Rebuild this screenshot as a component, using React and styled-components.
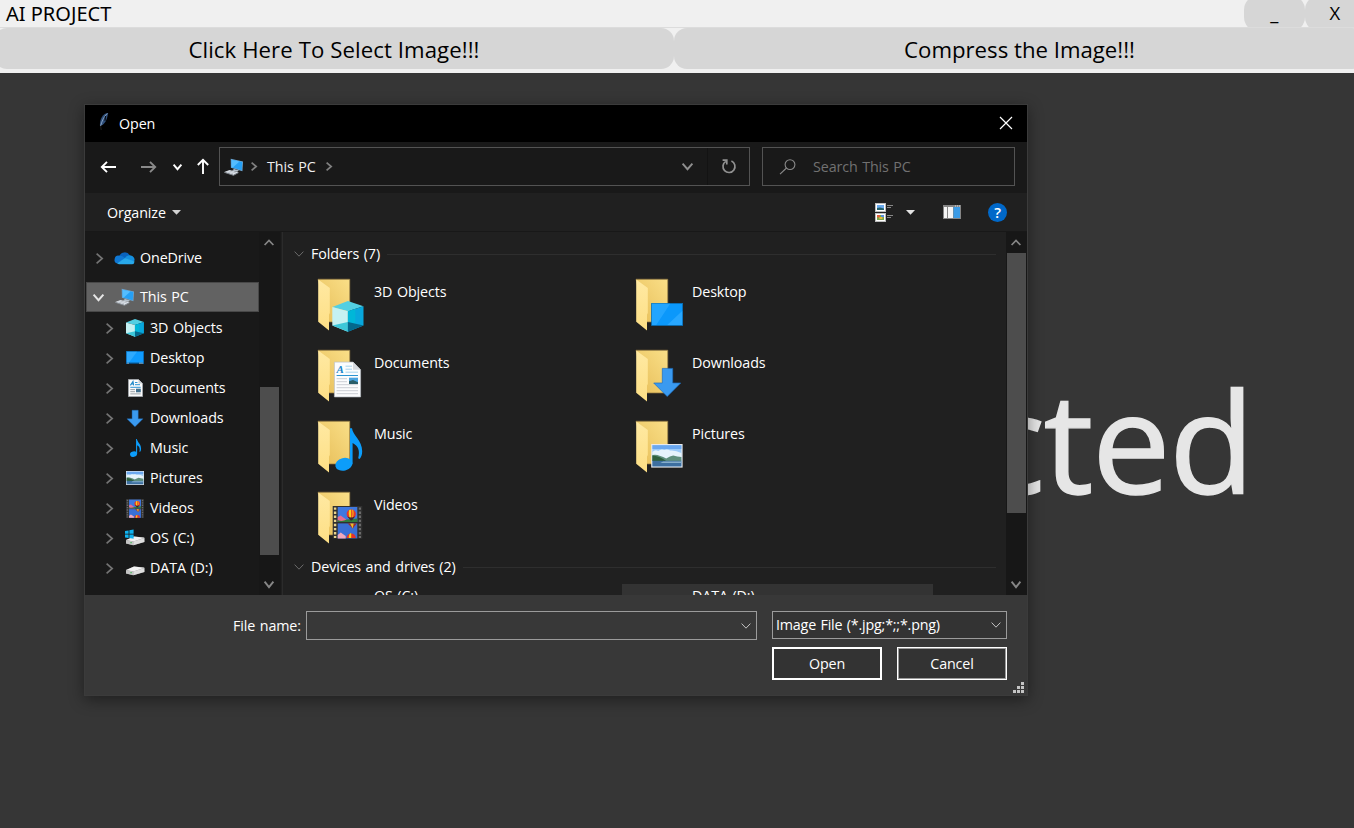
import React from "react";
import styled, { createGlobalStyle } from "styled-components";

const Global = createGlobalStyle`
  * { box-sizing: border-box; }
  html, body, #root { margin: 0; height: 100%; overflow: hidden; }
  body { font-family: "Open Sans", "Noto Sans", sans-serif; background: #363636; }
  svg { display: block; flex: none; overflow: visible; }
`;

/* ---------- host application ---------- */
const Page = styled.div`
  position: relative;
  width: 1354px;
  height: 828px;
  display: flex;
  flex-direction: column;
  overflow: hidden;
  background: #363636;
`;
const TitleBar = styled.div`
  height: 28px;
  display: flex;
  justify-content: space-between;
  background: #f0f0f0;
  border-bottom: 1px solid #dcdcdc;
  overflow: hidden;
`;
const AppTitle = styled.div`
  padding-left: 6px;
  font: 20px/27px "Noto Sans", sans-serif;
  letter-spacing: 0;
  color: #000;
`;
const Controls = styled.div`
  display: flex;
  margin: -5px -11px -6px 0;
`;
const Control = styled.div`
  width: 60.5px;
  height: 37px;
  border-radius: 15px;
  background: #d6d6d6;
  display: flex;
  align-items: center;
  justify-content: center;
  font-size: 18.5px;
  line-height: 1;
  color: #000;
`;
const Actions = styled.div`
  height: 45px;
  display: flex;
  margin: 0 -6px;
  padding-bottom: 4px;
  background: #f0f0f0;
`;
const Action = styled.div`
  width: ${(p) => p.$w}px;
  flex: none;
  border-radius: 13px;
  background: #d6d6d6;
  color: #000;
  text-align: center;
  font-size: 22.2px;
  line-height: 43px;
  letter-spacing: ${(p) => p.$track};
`;
const Stage = styled.div`
  flex: 1;
  display: flex;
  justify-content: flex-end;
  align-items: center;
  padding: 0 101px 21px 0;
  color: #e6e6e6;
  font-size: 140px;
  line-height: 1;
  letter-spacing: -1.6px;
  word-spacing: -20px;
  -webkit-text-stroke: 1.4px #e6e6e6;
  white-space: nowrap;
`;

/* ---------- dialog ---------- */
const Dialog = styled.div`
  position: absolute;
  left: 84px;
  top: 104px;
  width: 944px;
  height: 592px;
  border: 1px solid #3b3b3b;
  background: #383838;
  box-shadow: 0 4px 14px rgba(0, 0, 0, 0.42);
  display: flex;
  flex-direction: column;
  color: #fff;
  font-size: 14.3px;
  letter-spacing: -0.12px;
  word-spacing: 1px;
  line-height: 20px;
  white-space: nowrap;
`;
const DialogTitle = styled.div`
  height: 37px;
  background: #000;
  display: flex;
  align-items: center;
  padding: 0 14px 0 12px;
  gap: 8px;
`;
const CloseButton = styled.div`
  padding-bottom: 2px;
`;
const AppIcon = styled.div`
  padding-bottom: 3px;
`;
const Spacer = styled.div`
  flex: 1;
`;
const Nav = styled.div`
  height: 51px;
  background: #191919;
  display: flex;
  align-items: center;
  padding-bottom: 2px;
`;
const NavCell = styled.div`
  width: ${(p) => p.$w}px;
  display: flex;
  justify-content: center;
  padding-top: 1px;
`;
const Address = styled.div`
  width: 531px;
  height: 39px;
  margin-left: 5px;
  border: 1px solid #535353;
  display: flex;
  align-items: center;
  padding-left: 4px;
`;
const Crumb = styled.span`
  margin: 0 10px 0 10px;
  color: #f0f0f0;
`;
const AddressEnd = styled.div`
  width: ${(p) => p.$w}px;
  height: 100%;
  display: flex;
  align-items: center;
  justify-content: center;
  border-left: 1px solid ${(p) => (p.$line ? "#131313" : "transparent")};
`;
const Search = styled.div`
  width: 253px;
  height: 39px;
  margin-left: 12px;
  border: 1px solid #535353;
  display: flex;
  align-items: center;
  padding-left: 16px;
  gap: 17px;
  color: #717171;
`;
const Toolbar = styled.div`
  height: 39px;
  background: #202020;
  border-bottom: 1px solid #181818;
  display: flex;
  align-items: center;
  padding: 0 20px 0 22px;
`;
const ToolbarLabel = styled.span`
  padding-top: 1px;
`;
const Gap = styled.div`
  width: ${(p) => p.$w}px;
`;
const Help = styled.div`
  width: 19px;
  height: 19px;
  border-radius: 50%;
  background: #0068c9;
  text-align: center;
  font-size: 15px;
  font-weight: 600;
  line-height: 19px;
`;
const Body = styled.div`
  height: 363px;
  display: flex;
  overflow: hidden;
  background: #202020;
`;
const Tree = styled.div`
  width: 174px;
  background: #191919;
  padding-top: 11px;
`;
const TreeRow = styled.div`
  height: ${(p) => (p.$active ? 30 : 30)}px;
  display: flex;
  align-items: center;
  padding-left: ${(p) => (p.$nested ? 18 : 8)}px;
`;
const ActiveRow = styled(TreeRow)`
  margin: 9px 0 1px 1px;
  padding-left: 6px;
  background: #626262;
  box-shadow: inset 0 0 0 1px #484848;
`;
const TreeChevron = styled.div`
  width: 12px;
  display: flex;
  justify-content: center;
`;
const TreeIcon = styled.div`
  width: 20px;
  margin: 0 5px 0 10px;
  display: flex;
  justify-content: center;
`;
const ActiveIcon = styled(TreeIcon)`
  margin-left: 11px;
`;
const Scroll = styled.div`
  width: 21px;
  background: #171717;
  display: flex;
  flex-direction: column;
  align-items: center;
  justify-content: space-between;
  padding: 7px 0;
`;
const ScrollButton = styled.div`
  padding-right: 1px;
`;
const Track = styled.div`
  flex: 1;
  padding-top: ${(p) => p.$top}px;
`;
const Thumb = styled.div`
  width: 19px;
  height: ${(p) => p.$h}px;
  background: #4d4d4d;
`;
const Divider = styled.div`
  width: 3px;
  background: #202020;
  border-left: 1px solid #191919;
  border-right: 1px solid #2b2b2b;
`;
const Files = styled.div`
  width: 723px;
  padding: 8px 10px 0 11px;
  overflow: hidden;
`;
const GroupHead = styled.div`
  height: 28px;
  display: flex;
  align-items: center;
  gap: 7px;
  &::after {
    content: "";
    flex: 1;
    height: 1px;
    background: #2e2e2e;
  }
`;
const Grid = styled.div`
  display: grid;
  grid-template-columns: 318px 318px;
  grid-auto-rows: 54px;
  row-gap: 17px;
  padding-left: 24px;
  margin: 10px 0 8px;
`;
const Tile = styled.div`
  display: flex;
  align-items: flex-start;
  gap: 6px;
`;
const TileLabel = styled.span`
  padding-top: 4px;
`;
const Devices = styled.div`
  display: grid;
  grid-template-columns: 311px 311px;
  column-gap: 7px;
  margin: 3px 0 0 10px;
`;
const Device = styled.div`
  height: 60px;
  padding: 2px 0 0 70px;
  background: ${(p) => (p.$hover ? "#333" : "transparent")};
`;
const Footer = styled.div`
  flex: 1;
  background: #383838;
  padding: 16px 20px 0 148px;
`;
const FieldRow = styled.div`
  display: flex;
  align-items: flex-start;
`;
const FieldLabel = styled.label`
  width: 73px;
  line-height: 29px;
`;
const Combo = styled.div`
  width: ${(p) => p.$w}px;
  height: ${(p) => p.$h}px;
  border: 1px solid #9b9b9b;
  background: ${(p) => (p.$fill ? "#333" : "#383838")};
  display: flex;
  align-items: center;
  justify-content: space-between;
  padding: 0 5px 0 3px;
  letter-spacing: -0.2px;
  line-height: 22px;
`;
const ButtonRow = styled.div`
  display: flex;
  justify-content: flex-end;
  gap: 15px;
  margin-top: 7px;
`;
const Button = styled.div`
  width: 110px;
  height: 33px;
  border: ${(p) => (p.$primary ? 2 : 1)}px solid #fff;
  box-shadow: ${(p) => (p.$primary ? "none" : "inset 0 0 0 1px #9b9b9b")};
  background: #333;
  display: flex;
  align-items: center;
  justify-content: center;
`;
const Grip = styled.div`
  display: flex;
  justify-content: flex-end;
  margin: 2px -17px 0 0;
`;

/* ---------- glyphs ---------- */
const Chevron = ({ w = 10, h = 6, color = "#9a9a9a", sw = 1.6 }) => (
  <svg width={w} height={h} fill="none" stroke={color} strokeWidth={sw}>
    <path d={`M.6 .6 L${w / 2} ${h - 0.8} L${w - 0.6} .6`} />
  </svg>
);
const ChevronUp = () => (
  <svg width="10" height="7" fill="none" stroke="#868686" strokeWidth="1.7">
    <path d="M.6 6 L5 1.4 L9.4 6" />
  </svg>
);
const ChevronRight = ({ w = 6, h = 10, color = "#808080", sw = 1.7 }) => (
  <svg width={w} height={h} fill="none" stroke={color} strokeWidth={sw}>
    <path d={`M.6 .6 L${w - 0.8} ${h / 2} L.6 ${h - 0.6}`} />
  </svg>
);
const Arrow = ({ color, turn = 0 }) => (
  <svg width="16" height="12" fill="none" stroke={color} strokeWidth="1.9">
    <g transform={`rotate(${turn} 8 6)`}>
      <path d="M.6 6 H15 M6 .8 L.8 6 L6 11.2" />
    </g>
  </svg>
);
const Caret = ({ color = "#d2d2d2" }) => (
  <svg width="9" height="5">
    <path d="M0 0 H9 L4.5 4.8 Z" fill={color} />
  </svg>
);
const Feather = () => (
  <svg width="14" height="20">
    <path d="M11.2 1 C6 1.5 2.8 6 2.9 13.5 L5.6 13 C9.2 10 10.2 6 11.2 1Z" fill="#2f4f7b" />
    <path d="M10.3 1.4 C7 4.5 5 8.6 3.6 14" stroke="#8fa9c8" strokeWidth=".9" fill="none" />
    <path d="M8.5 4 L8 8.8" stroke="#05090f" strokeWidth="1.2" />
    <path d="M3.6 14 L4.2 18" stroke="#222" strokeWidth=".9" />
  </svg>
);
const PC = () => (
  <svg width="20" height="18">
    <path d="M6.7 .8 L19 3.4 L18.4 13.3 L6.9 9.8Z" fill="#6fa5cf" />
    <path d="M7.6 1.8 L18.3 4.1 L17.7 12.2 L7.6 9.2Z" fill="#25a0f5" />
    <path d="M7.6 1.8 L15.5 3.5 L8.8 9.5 L7.6 9.2Z" fill="#54bdff" />
    <path d="M10 11 L15 12.4 L13.2 13.8 L8 12.4Z" fill="#b7c3ce" />
    <path d="M.3 14 L5.5 12 L14.5 14.3 L9.5 16.9Z" fill="#dce1e8" />
    <path d="M.3 14 L9.5 16.9 L14.5 14.3 V15 L9.5 17.8 L.3 14.8Z" fill="#8e969f" />
    <path d="M3 14 L9 15.7 M5.2 13 L11.8 14.8" stroke="#a9b1bb" strokeWidth=".6" />
  </svg>
);
const Cloud = () => (
  <svg width="20" height="14">
    <path d="M4.2 5 A6 6 0 0 1 14.8 4.2 L12 9 L2 11 A4 4 0 0 1 4.2 5Z" fill="#0a63bd" />
    <path d="M4.5 4.8 C7 4.6 8.4 6 10 7 L2.6 12.6 A4 4 0 0 1 4.5 4.8Z" fill="#0f78d4" />
    <path d="M10 7 C11.6 4.8 13.8 3.6 15.7 4.6 A4.4 4.4 0 0 1 19.6 9.4 L17 11Z" fill="#1490df" />
    <path d="M2.2 12.2 L10 7 L19.6 10.4 A3.2 3.2 0 0 1 16.8 13.3 H4.2 A3.8 3.8 0 0 1 2.2 12.2Z" fill="#28a8ea" />
  </svg>
);
const CubeShape = () => (
  <g>
    <path d="M0 6 L15.6 0 L31.2 5.2 L15.6 10.3Z" fill="#53cfe2" />
    <path d="M0 6 L15.6 10.3 V30.7 L0 24.5Z" fill="#c5f1f2" />
    <path d="M0 24.5 L15.6 21 V30.7Z" fill="#3dc7d9" />
    <path d="M15.6 10.3 L31.2 5.2 V24.5 L15.6 30.7Z" fill="#08a7dc" />
    <path d="M15.6 10.3 L23 8 V22.8 L15.6 21Z" fill="#00b7d8" />
    <path d="M15.6 21 L31.2 24.5 L15.6 30.7Z" fill="#04688c" />
  </g>
);
const NoteShape = () => (
  <g fill="#0c9dfa">
    <ellipse cx="8.6" cy="36" rx="8.6" ry="6.3" transform="rotate(-14 8.6 36)" />
    <path d="M14.8 0 H16.8 C17.4 7 27 12 27 23 C27 26.5 26 28.8 24.4 30.8 L23 30 C25 22 23 17.5 17.4 14.6 V36 H14.8Z" />
  </g>
);
const ArrowShape = () => (
  <path d="M8.6 .4 H19 V15 H27 L13.5 28.5 L0 15 H8.6Z" fill="#3a9af0" stroke="#1d6fc0" strokeWidth=".7" />
);
const PageShape = () => (
  <g>
    <path d="M.4 .4 H19 L26.6 8 V35.2 H.4Z" fill="#fbfcfd" stroke="#b9bec4" strokeWidth=".7" />
    <path d="M19 .4 V8 H26.6Z" fill="#d5d9de" />
    <text x="2.5" y="11.6" fontFamily="Liberation Serif, serif" fontStyle="italic" fontWeight="700" fontSize="11" fill="#1b86c8">A</text>
    <path d="M11.5 4.5 H18 M11.5 7.5 H18 M11.5 10.5 H24" stroke="#a5d2ec" strokeWidth="1" />
    <path d="M2.6 13.8 H24" stroke="#2b93d2" strokeWidth="1" />
    <path d="M2.6 17 H13 M2.6 20 H13 M2.6 23 H24 M2.6 26 H24 M2.6 29 H24 M2.6 32 H24" stroke="#c6cbd0" strokeWidth=".9" />
    <rect x="15" y="16" width="9" height="6.2" fill="#4aa3df" />
    <path d="M15 19.5 L19 18.3 L24 20.5 V22.2 H15Z" fill="#285c67" />
  </g>
);
const DeskShape = () => (
  <g>
    <rect x=".4" y=".4" width="31" height="22" fill="#0b98fb" stroke="#0870b9" strokeWidth=".8" />
    <path d="M.8 .8 H19 L5 22 H.8Z" fill="#22a5ff" />
    <path d="M31 8 V22 H16Z" fill="#28a7ff" />
  </g>
);
const PhotoShape = () => (
  <g>
    <rect width="31.4" height="23.6" fill="#e9e9e9" />
    <rect x="1.2" y="1.2" width="29" height="21.2" fill="#9ccbf8" />
    <path d="M1.2 1.2 H30.2 V5 H1.2Z" fill="#6aa7ef" />
    <path d="M1.2 8 Q4 5 7 7 Q10 4.4 13 6 Q16 4.6 19 6.6 Q24 6 30.2 9 V15 H1.2Z" fill="#e6f3fb" />
    <path d="M1.2 11 Q5 10 9 12 Q12 12.6 15 14.4 Q19 12.4 22 11.6 Q26 13 30.2 13 V17 H1.2Z" fill="#5f8f7c" />
    <path d="M1.2 11.6 Q8 12 15 17 H1.2Z" fill="#2f5f3d" />
    <rect x="1.2" y="16.8" width="29" height="5.6" fill="#3d6fa0" />
    <path d="M12 17.4 H30.2 V19 H9Z" fill="#86aecb" />
  </g>
);
const Balloon = ({ x, y }) => (
  <g transform={`translate(${x} ${y})`}>
    <circle cx="5" cy="4.5" r="4.6" fill="#e6332a" />
    <path d="M3 .4 Q1.6 5 4 9 L5 9 V0Z" fill="#f7d117" />
    <path d="M7 .5 Q8.4 5 6.2 8.8 L5.6 9 Q6.8 5 5.8 0Z" fill="#f7a717" />
    <path d="M1 6.6 L4.4 11 H5.8 L9 6.6 Q5 9 1 6.6Z" fill="#3d2530" />
  </g>
);
const FilmShape = ({ holes = "#e9d48d" }) => (
  <g>
    <rect width="29.6" height="32.6" fill="#303030" />
    <rect x="5" y="1" width="19.6" height="15" fill="#3f78df" />
    <rect x="5" y="17.4" width="19.6" height="15" fill="#3a6fd5" />
    <path d="M5 11 L8 9.5 L14 14 L15 16 H5Z" fill="#e56b91" />
    <path d="M5 14 Q9 16 14 13.6 L24.6 12.5 V16 H5Z" fill="#2f7b3d" />
    <path d="M5 29 L8 26.5 L13 30 V32.4 H5Z" fill="#f1a8bc" />
    <Balloon x={13.5} y={3.6} />
    <g transform="translate(13.5 25.5)">
      <path d="M.4 6.6 A4.6 4.6 0 0 1 9.6 6.6Z" fill="#e6332a" />
      <path d="M2.6 6.6 Q2.4 2 5 1.4 V6.6Z" fill="#f7d117" />
    </g>
    <path d="M15 17.4 H24 L20 22.5Z" fill="#a12a2a" />
    <path d="M17.5 17.4 H21 L20 22.5Z" fill="#e8c22a" />
    <path d="M2.4 1.4 V32" stroke={holes} strokeWidth="2.4" strokeDasharray="2.4 1.7" />
    <path d="M27.2 1.4 V32" stroke="#6b6b6b" strokeWidth="2.2" strokeDasharray="2.4 1.7" />
  </g>
);
const DriveShape = () => (
  <g>
    <path d="M1 12 L9 8.6 L19.4 9.6 L19.4 14 L8 17.2 L1 15.4Z" fill="#8f8f8f" />
    <path d="M1 12 L9 8.4 L19.4 9.8 L8.6 13.4Z" fill="#f2f2f2" />
    <path d="M1 12.2 L8.4 13.6 V17.2 L1 15.4Z" fill="#c4c4c4" />
    <path d="M8.4 13.6 L19.4 10 V14 L8.4 17.2Z" fill="#dedede" />
    <rect x="5.2" y="14.2" width="1.8" height="1" fill="#4dbb5f" />
  </g>
);

const overlay = {
  cube: <g transform="translate(14.3 23)"><CubeShape /></g>,
  desk: <g transform="translate(15.2 25)"><DeskShape /></g>,
  page: <g transform="translate(16 12.7)"><PageShape /></g>,
  arrow: <g transform="translate(17.7 19)"><ArrowShape /></g>,
  note: <g transform="translate(17.2 8.3)"><NoteShape /></g>,
  photo: <g transform="translate(15.2 24)"><PhotoShape /></g>,
  film: <g transform="translate(14.7 15)"><FilmShape /></g>,
};
const Folder = ({ kind }) => (
  <svg width="50" height="54">
    <defs>
      <linearGradient id={`back-${kind}`} x1="0" y1="1" x2="1" y2="0">
        <stop offset="0" stopColor="#e6bd57" />
        <stop offset="1" stopColor="#fadf88" />
      </linearGradient>
      <linearGradient id={`flap-${kind}`} x1="0" y1="0" x2="0" y2="1">
        <stop offset="0" stopColor="#ffe9a2" />
        <stop offset="1" stopColor="#fddf85" />
      </linearGradient>
    </defs>
    <path d="M0 1.2 H31.8 V44 H10Z" fill={`url(#back-${kind})`} stroke="#8a713c" strokeWidth=".7" />
    <path d="M.2 1.4 L11.8 10 V35 L11 36.5 V52.4 L.2 43.8Z" fill={`url(#flap-${kind})`} />
    {overlay[kind]}
  </svg>
);

const small = {
  cloud: <Cloud />,
  pc: <PC />,
  cube: <svg width="18" height="18"><g transform="scale(.575 .58)"><CubeShape /></g></svg>,
  desk: (
    <svg width="18" height="14">
      <rect x=".4" y=".4" width="17.2" height="12.2" fill="#0f9bff" stroke="#0a6fb8" strokeWidth=".8" />
      <path d="M.8 .8 H11 L3 11.4 H.8Z" fill="#2faaff" />
      <path d="M.8 12.2 H17.2" stroke="#08395e" />
      <path d="M1.5 12.2 H2.5 M13.5 12.2 H14.5 M15.5 12.2 H16.5" stroke="#fff" />
    </svg>
  ),
  page: (
    <svg width="15" height="18">
      <path d="M.5 .5 H10.5 L14.5 4.5 V17.5 H.5Z" fill="#fafafa" stroke="#a0a4a8" />
      <path d="M10.5 .5 V4.5 H14.5Z" fill="#c9cdd1" />
      <path d="M2.4 6.4 L5 2.4 L5.6 6.4 M3.4 5 H5.5" stroke="#1b86c8" strokeWidth="1.1" fill="none" />
      <path d="M7 3.5 H9.5 M7 5.7 H12 M2.3 8.3 H12.7" stroke="#2b93d2" />
      <path d="M2.3 10.6 H7 M2.3 12.7 H7 M2.3 14.9 H12.7" stroke="#9aa0a6" />
      <rect x="8" y="9.7" width="4.8" height="3.6" fill="#43718e" />
    </svg>
  ),
  arrow: <svg width="16" height="17"><g transform="scale(.59)"><ArrowShape /></g></svg>,
  note: <svg width="11" height="18"><g transform="scale(.41 .42)"><NoteShape /></g></svg>,
  photo: <svg width="18" height="14"><g transform="scale(.573 .59)"><PhotoShape /></g></svg>,
  film: <svg width="18" height="19"><g transform="scale(.608 .582)"><FilmShape holes="#6b6b6b" /></g></svg>,
  os: (
    <svg width="20" height="18">
      <g transform="translate(0 -1)"><DriveShape /></g>
      <path d="M0 2 L3.6 1.4 V4.8 H0Z M4.4 1.2 L8.6 .6 V4.8 H4.4Z M0 5.6 H3.6 V9 L0 8.5Z M4.4 5.6 H8.6 V9.7 L4.4 9.1Z" fill="#10b3f0" />
    </svg>
  ),
  drive: <svg width="20" height="18"><g transform="translate(0 -1)"><DriveShape /></g></svg>,
};

const places = [
  ["3D Objects", "cube"],
  ["Desktop", "desk"],
  ["Documents", "page"],
  ["Downloads", "arrow"],
  ["Music", "note"],
  ["Pictures", "photo"],
  ["Videos", "film"],
];
const drives = [
  ["OS (C:)", "os"],
  ["DATA (D:)", "drive"],
];

const TreeItem = ({ label, icon, nested }) => (
  <TreeRow $nested={nested}>
    <TreeChevron><ChevronRight w={7} h={11} color="#737373" /></TreeChevron>
    <TreeIcon>{small[icon]}</TreeIcon>
    <span>{label}</span>
  </TreeRow>
);

const ScrollBar = ({ top, size }) => (
  <Scroll>
    <ScrollButton><ChevronUp /></ScrollButton>
    <Track $top={top}><Thumb $h={size} /></Track>
    <ScrollButton><Chevron w={10} h={7} color="#868686" sw={1.9} /></ScrollButton>
  </Scroll>
);

export default function App() {
  return (
    <Page>
      <Global />
      <TitleBar>
        <AppTitle>AI PROJECT</AppTitle>
        <Controls>
          <Control>_</Control>
          <Control>X</Control>
        </Controls>
      </TitleBar>
      <Actions>
        <Action $w={680} $track="0.08px">Click Here To Select Image!!!</Action>
        <Action $w={691} $track="0">Compress the Image!!!</Action>
      </Actions>
      <Stage>No Image Selected</Stage>

      <Dialog>
        <DialogTitle>
          <AppIcon><Feather /></AppIcon>
          <span>Open</span>
          <Spacer />
          <CloseButton>
            <svg width="14" height="14" stroke="#fff" strokeWidth="1.2">
              <path d="M1 1 L13 13 M13 1 L1 13" />
            </svg>
          </CloseButton>
        </DialogTitle>

        <Nav>
          <NavCell $w={47}><Arrow color="#fff" /></NavCell>
          <NavCell $w={31}><Arrow color="#8a8a8a" turn={180} /></NavCell>
          <NavCell $w={29}><Chevron w={9} h={6} color="#fff" sw={1.9} /></NavCell>
          <NavCell $w={22}><Arrow color="#fff" turn={90} /></NavCell>
          <Address>
            <PC />
            <Gap $w={7} />
            <ChevronRight h={9} />
            <Crumb>This PC</Crumb>
            <ChevronRight h={9} />
            <Spacer />
            <AddressEnd $w={41}><Chevron w={11} h={7} color="#8f8f8f" sw={1.9} /></AddressEnd>
            <AddressEnd $w={42} $line>
              <svg width="15" height="15" fill="none" stroke="#919191" strokeWidth="1.7">
                <path d="M10.4 2 A6 6 0 1 1 4.8 2.4" />
                <path d="M1.6 1.2 H5.8 V5.6" />
              </svg>
            </AddressEnd>
          </Address>
          <Search>
            <svg width="17" height="16" fill="none" stroke="#8a8a8a" strokeWidth="1.1">
              <circle cx="11" cy="5.6" r="4.9" />
              <path d="M7.5 9 L1 15.2" />
            </svg>
            <span>Search This PC</span>
          </Search>
        </Nav>

        <Toolbar>
          <ToolbarLabel>Organize</ToolbarLabel>
          <Gap $w={6} />
          <Caret />
          <Spacer />
          <svg width="18" height="19">
            <rect x=".5" y=".5" width="10" height="8" fill="#fff" stroke="#bdbdbd" />
            <rect x="2" y="2" width="7" height="5" fill="#69a9ee" />
            <path d="M2 5 L5 4.4 L9 5.6 V7 H2Z" fill="#23606c" />
            <rect x=".5" y="10.5" width="10" height="8" fill="#fff" stroke="#bdbdbd" />
            <rect x="2" y="12" width="7" height="5" fill="#77a747" />
            <rect x="2" y="12" width="3" height="2.4" fill="#e0603c" />
            <rect x="6" y="12" width="3" height="2" fill="#5a8fe0" />
            <rect x="4.4" y="14" width="3" height="2" fill="#f0b83c" />
            <path d="M12 2.5 H18 M12 4.5 H16 M12 12.5 H18 M12 14.5 H16" stroke="#878787" />
          </svg>
          <Gap $w={13} />
          <Caret color="#e4e4e4" />
          <Gap $w={28} />
          <svg width="18" height="14">
            <rect width="18" height="14" fill="#858585" />
            <path d="M1 2 H4 V13 H1Z M5 2 H10 V13 H5Z" fill="#f4f4f4" />
            <rect x="10.5" y="2" width="6.5" height="11" fill="#3b9be6" />
            <path d="M12 1 H13 M14 1 H15 M16 1 H17" stroke="#ddd" />
          </svg>
          <Gap $w={27} />
          <Help>?</Help>
        </Toolbar>

        <Body>
          <Tree>
            <TreeItem label="OneDrive" icon="cloud" />
            <ActiveRow>
              <TreeChevron><Chevron w={11} h={7} color="#e6e6e6" sw={2} /></TreeChevron>
              <ActiveIcon>{small.pc}</ActiveIcon>
              <span>This PC</span>
            </ActiveRow>
            {[...places, ...drives].map(([label, icon]) => (
              <TreeItem key={label} label={label} icon={icon} nested />
            ))}
          </Tree>
          <ScrollBar top={141} size={168} />
          <Divider />
          <Files>
            <GroupHead>
              <Chevron w={10} h={6} color="#6a6a6a" sw={1} />
              <span>Folders (7)</span>
            </GroupHead>
            <Grid>
              {places.map(([label, kind]) => (
                <Tile key={label}>
                  <Folder kind={kind} />
                  <TileLabel>{label}</TileLabel>
                </Tile>
              ))}
            </Grid>
            <GroupHead>
              <Chevron w={10} h={6} color="#6a6a6a" sw={1} />
              <span>Devices and drives (2)</span>
            </GroupHead>
            <Devices>
              {drives.map(([label], i) => (
                <Device key={label} $hover={i === 1}>{label}</Device>
              ))}
            </Devices>
          </Files>
          <ScrollBar top={7} size={260} />
        </Body>

        <Footer>
          <FieldRow>
            <FieldLabel>File name:</FieldLabel>
            <Combo $w={451} $h={29}>
              <span />
              <Chevron w={10} h={6} color="#c4c4c4" sw={1} />
            </Combo>
            <Gap $w={15} />
            <Combo $w={235} $h={28} $fill>
              <span>Image File (*.jpg;*;;*.png)</span>
              <Chevron w={10} h={6} color="#c4c4c4" sw={1} />
            </Combo>
          </FieldRow>
          <ButtonRow>
            <Button $primary>Open</Button>
            <Button>Cancel</Button>
          </ButtonRow>
          <Grip>
            <svg width="11" height="11" fill="#c4c4c4">
              <path d="M8 0h3v3h-3zM4 4h3v3h-3zM8 4h3v3h-3zM0 8h3v3h-3zM4 8h3v3h-3zM8 8h3v3h-3z" />
            </svg>
          </Grip>
        </Footer>
      </Dialog>
    </Page>
  );
}
